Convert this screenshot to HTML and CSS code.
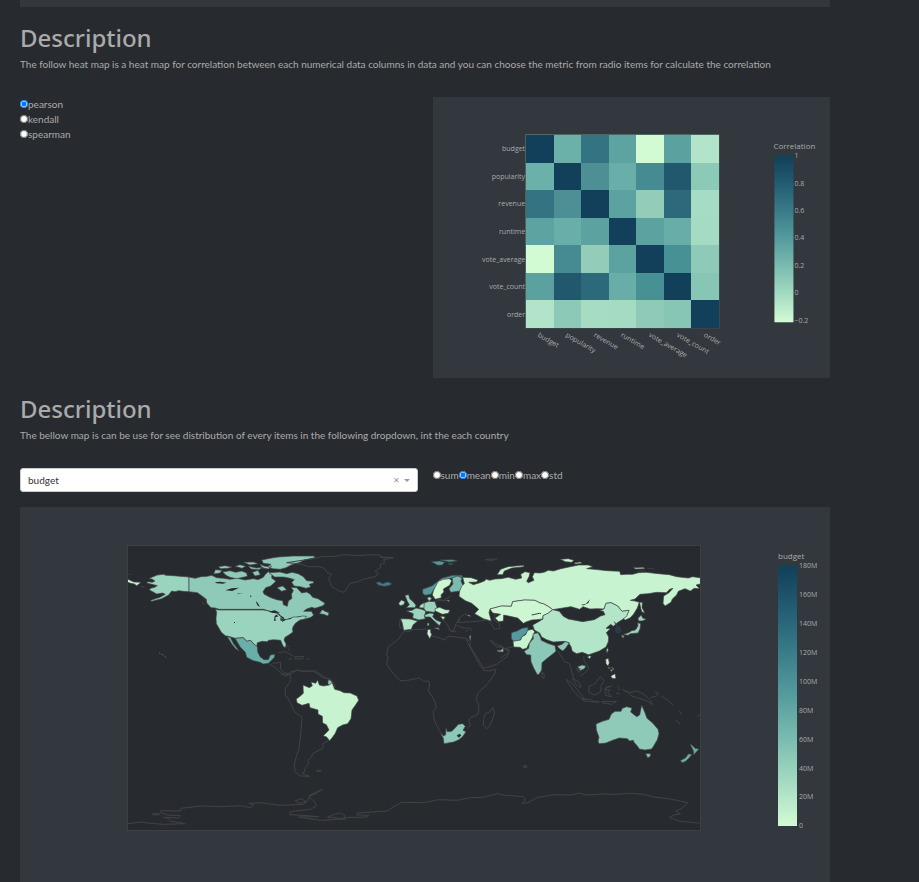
FILE: index.html
```html
<!DOCTYPE html>
<html lang="en">
<head>
<meta charset="utf-8">
<title>Movie data dashboard</title>
<link rel="stylesheet" href="styles.css">
</head>
<body>
<main class="page">
  <div class="panel-end"></div>

  <section class="block">
    <h1>Description</h1>
    <p>The follow heat map is a heat map for correlation between each numerical data columns in data and you can choose the metric from radio items for calculate the correlation</p>
    <div class="row">
      <div class="col radios-stacked">
        <label><input type="radio" name="metric" checked>pearson</label>
        <label><input type="radio" name="metric">kendall</label>
        <label><input type="radio" name="metric">spearman</label>
      </div>
      <div class="col panel">
        <svg class="chart" viewBox="0 0 397 281" role="img" aria-label="Correlation heat map">
          <defs>
            <linearGradient id="mint" x1="0" y1="1" x2="0" y2="0">
              <stop offset="0" stop-color="#d2fbd4"/><stop offset=".1667" stop-color="#a5dbc2"/><stop offset=".3333" stop-color="#7bbcb0"/><stop offset=".5" stop-color="#559c9e"/><stop offset=".6667" stop-color="#3a7c89"/><stop offset=".8333" stop-color="#235d72"/><stop offset="1" stop-color="#123f5a"/>
            </linearGradient>
          </defs>
          <rect class="frame" x="92" y="37" width="194" height="194"/>
          <g id="cells" transform="translate(93 38)"></g>
          <g class="tick end">
            <text x="92" y="54">budget</text><text x="92" y="82">popularity</text><text x="92" y="109">revenue</text><text x="92" y="137">runtime</text><text x="92" y="165">vote_average</text><text x="92" y="192">vote_count</text><text x="92" y="220">order</text>
          </g>
          <g class="tick">
            <text transform="translate(104 239) rotate(30)">budget</text><text transform="translate(132 239) rotate(30)">popularity</text><text transform="translate(160 239) rotate(30)">revenue</text><text transform="translate(187 239) rotate(30)">runtime</text><text transform="translate(215 239) rotate(30)">vote_average</text><text transform="translate(243 239) rotate(30)">vote_count</text><text transform="translate(270 239) rotate(30)">order</text>
          </g>
          <text class="legend" x="340" y="52">Correlation</text>
          <rect x="341" y="59" width="19" height="166" fill="url(#mint)"/>
          <g class="tick">
            <text x="361" y="61">1</text><text x="361" y="89">0.8</text><text x="361" y="116">0.6</text><text x="361" y="143">0.4</text><text x="361" y="171">0.2</text><text x="361" y="198">0</text><text x="361" y="226">−0.2</text>
          </g>
        </svg>
      </div>
    </div>
  </section>

  <section class="block">
    <h1>Description</h1>
    <p>The bellow map is can be use for see distribution of every items in the following dropdown, int the each country</p>
    <div class="row">
      <div class="col dropdown">
        <select aria-label="Column"><option>budget</option></select>
        <button class="clear" type="button" aria-label="Clear">×</button>
        <span class="arrow"></span>
      </div>
      <div class="col radios-inline">
        <label><input type="radio" name="agg">sum</label><label><input type="radio" name="agg" checked>mean</label><label><input type="radio" name="agg">min</label><label><input type="radio" name="agg">max</label><label><input type="radio" name="agg">std</label>
      </div>
    </div>
    <div class="panel map-panel">
      <svg class="chart" viewBox="0 0 810 375" role="img" aria-label="World map of budget">
        <svg x="107" y="38" width="574" height="286" viewBox="0 0 1722 858">
          <rect class="sea" width="1722" height="858"/>

          <!-- North America -->
          <g transform="translate(-21 -15)">
            <path class="land" fill="#9bd4be" d="M88 115L112 105 130 103 138 106 160 107 180 109 207 111V155L190 154 176 152 165 155 155 153 146 165 125 176 95 184 92 181 120 172 136 163 128 159 110 162 98 155 88 150 92 145 104 142 112 137 96 133 80 129 84 125 97 127 105 123 97 118Z"/>
            <path class="land" fill="#c8f3d0" d="M21 116L33 122 42 126 63 127 56 133 50 137 43 132 32 130 21 126ZM21 103h12"/>
            <path class="land" fill="#8fcab8" d="M207 111L225 115 243 110 262 109 275 106 290 113 310 115 330 118 352 115 375 120 400 116 414 119 430 112 436 103 445 95 456 103 455 114 468 124 452 138 437 143 429 155 432 162 450 172 470 179 488 182 490 194 502 199 505 183 516 175 514 163 520 152 513 142 530 143 545 159 560 156 570 162 578 172 594 176 615 190 609 197 585 205 575 202 560 207 551 214 574 214 581 225 573 232 553 238 540 229 520 235 497 240 483 235 478 222 450 214 430 208H297L286 204 273 203 260 189 259 178 245 167 232 158 207 155Z"/>
            <path class="land" fill="#8fcab8" d="M286 89L306 91 300 99 281 102ZM308 96L330 92 347 97 365 93 380 99 382 109 350 116 330 112 318 106ZM295 80L315 77 336 81 324 85 302 86ZM345 79L360 74 377 79 366 85ZM370 67L400 66 415 71 390 75ZM385 79L410 84 430 82 416 89 393 87ZM397 97L414 91 421 104 405 108ZM420 73L435 79 455 78 446 87 427 84ZM425 60L450 55 475 51 520 48 583 48 584 53 553 60 540 67 515 74 498 83 481 88 458 86 442 80 453 73 430 70ZM447 98L480 96 500 101 516 97 534 101 550 110 560 122 580 124 581 129 568 133 572 141 558 145 541 140 522 138 515 127 523 119 507 114 490 111 464 111ZM471 143L488 138 500 149 485 154ZM598 221L607 209 618 215 627 218 624 228 611 223Z"/>
            <path class="land" fill="#9bd4be" d="M295 210H430L450 214 470 220 483 230 482 241 504 238 520 231 535 231 548 228 560 229 554 237 540 240 526 250 520 259 517 267 519 276 505 286 495 292 492 300 498 312 497 322 491 321 486 311 482 301 461 299 446 301 441 305 427 304 412 308 410 320 400 311 392 301 380 304 370 293 345 295 330 290 316 287 304 277 297 265 289 251 288 235 290 216 286 208Z"/>
            <path class="land" fill="#69afa9" d="M345 295L370 293 380 304 392 301 400 311 412 320 413 335 420 350 432 359 445 359 451 345 465 343 463 352 456 359 445 370 430 372 420 367 400 362 380 352 376 337 360 320ZM322 291L331 292 340 310 351 324 357 333 347 326 335 312Z"/>
            <path class="lake" d="M284 127L300 125 320 128 309 131 290 130ZM316 151L335 145 357 143 337 153ZM351 161l19-1-17 3ZM390 166l5 3-4 3ZM407 183L413 188 420 201 412 196ZM445 215L464 211 480 218 460 219ZM464 228L469 224 476 229 466 232 467 243 462 242ZM479 224L492 233 494 239 485 233ZM483 242L501 237 488 245ZM502 236l16-3-8 5ZM342 246h3v3h-3Z"/>
            <path class="line" d="M148 164l6 7M245 184l7 10M251 174l8 10M62 139l12 3"/>
            <path class="islet" d="M117 338l4 3M124 343l6 2M133 348l6 5"/>
          </g>

          <!-- Greenland, Caribbean, Iceland -->
          <g transform="translate(399 -15)">
            <path class="line" d="M80 68L103 70 125 73 145 80 178 80 193 85 201 97 215 103 205 118 213 131 215 140 235 152 252 157 258 150 270 130 288 127 310 118 345 110 356 101 345 94 362 83 361 74 375 66 370 59 400 53 362 51 362 46 330 44 296 47 252 44 226 49 185 50 160 56 126 61Z"/>
            <path class="land" fill="#3d7f8c" d="M348 128L358 126 367 131 383 126 394 130 392 135 374 139 357 136Z"/>
            <path class="line" d="M38 370L62 367 61 386 71 398 91 402 112 390 130 394 167 392 190 410 213 420M25 370L43 381 62 398 76 409 91 402M55 338L76 335 100 348M105 350L132 349 126 357 105 356ZM138 357h10M85 357h11M81 318l8 2M87 325v7"/>
          </g>

          <!-- South America -->
          <g transform="translate(399 345)">
            <path class="line" d="M62 42L80 45 92 35 115 30 122 34 157 33 169 38 190 54 210 57 222 70 226 86M91 40L91 65 77 83 75 104 90 125 103 155 126 171 122 222 117 264 109 290 103 312 105 335 122 348 149 349 130 342 137 322 147 310 143 303 155 290 158 281 178 270 189 263 188 251 207 240M125 340l8-3M169 333l8-3 7 2-7 3Z"/>
            <path class="land" fill="#c8f3d0" d="M129 75L148 83 157 77 153 66 167 70 173 60 178 75 190 78 207 75 216 67 224 88 240 92 252 98 271 99 291 108 296 121 286 136 276 150 273 176 263 191 248 195 233 203 226 220 218 231 209 242 200 231 190 227 207 210 199 194 188 189 187 169 174 162 174 150 150 143 147 130 126 136 111 128 109 117 121 108 130 100Z"/>
            <path class="land" fill="#8bc8b7" d="M204 60l8 1 4 7-8 7-4-4Z"/>
          </g>

          <!-- Africa and the Middle East -->
          <g transform="translate(759 225)">
            <path class="line" d="M74 31L84 35 100 29 143 27M155 48L170 51 195 60 202 49 219 50 258 55 265 72 275 90 286 112 299 134 311 151 326 153 347 148 345 160 325 189 295 218 288 235 297 257 295 281 272 294 266 300 271 318 262 325M74 31L53 60 25 80 20 100 24 115 20 133 35 155 60 182 80 181 110 176 120 174 130 184 147 183 149 195 145 212 157 230 166 250 168 263 159 275 163 300 177 330 188 345M258 55L271 67 270 77 281 96 300 127 312 145 350 133 381 110 387 95 368 82 350 81 331 63 332 60 346 71 376 86 398 80M338 263L344 280 332 312 321 326 310 315 311 298 317 280 328 277Z"/>
            <path class="land" fill="#8bc8b7" d="M182 341L191 348 197 344 198 324 202 335 215 334 223 326 235 313 248 311 256 319 249 331 258 335 247 351 235 360 221 366 192 371 190 355ZM350 91L362 91 370 84 370 96 355 95Z"/>
            <path class="lake" d="M230 347l8-6 6 5-7 7Z"/>
            <path class="land" fill="#c8f3d0" d="M143 29L152 28 152 37 155 44 149 56 141 41Z"/>
            <path class="land" fill="#a5dbc2" d="M270 46l3 1-2 15-3-8Z"/>
            <path class="line" d="M430 440l4-4 6 2-2 6-6-1Z"/>
          </g>

          <!-- Europe -->
          <g transform="translate(759 -15)">
            <path class="line" d="M60 240L58 260 68 266M188 237L203 255 212 274 222 270 228 251M228 251L240 232 254 222 270 229M230 255L245 263 272 265 275 272M240 232L235 248 300 243 323 239M215 275h13M256 273l9-3M157 185L180 182 210 181M157 173L190 181 213 168M345 220L342 240 358 251 360 266 342 267 335 253 323 239M0 52L40 54"/>
            <path class="land" fill="#53999d" d="M128 148L157 137 185 115 218 106 246 106 248 111 225 111 206 117 187 125 170 137 160 151 153 163 135 166 128 160ZM154 65L178 63 194 67 186 75 174 76ZM180 60L218 59 232 63 208 66ZM204 71l16 0-10 3Z"/>
            <path class="land" fill="#cdf7d2" d="M160 153L166 140 175 124 190 118 208 116 215 122 209 136 190 147 192 156 183 164 184 173 166 178 157 165Z"/>
            <path class="land" fill="#7bbcb0" d="M216 114L232 108 246 113 243 124 249 136 240 153 212 157 207 146 219 132Z"/>
            <path class="land" fill="#9bd4be" d="M75 166L86 164 89 176 98 184 108 195 105 203 79 203 88 194 82 184ZM80 213L96 211 108 204 126 208 137 213 134 231 136 236 117 240 98 234 100 221ZM132 189L147 184 165 185 172 206 162 217 138 214 130 203ZM132 225L150 219 162 221 158 230 168 240 184 247 178 257 164 244 150 231 135 231ZM141 173l9-3 5 6-8 8ZM162 264l13-1 4 6Z"/>
            <path class="land" fill="#b3e5c9" d="M62 236L90 237 113 243 99 255 94 268 71 271 67 250ZM56 190L64 180 75 185 71 194 60 197ZM120 196L132 188 132 204 118 203ZM142 249h5v8h-5Z"/>
            <path class="land" fill="#c8f3d0" d="M165 206L179 202 196 209 210 210 205 220 187 223 177 218 166 213ZM200 181l9 0-3 4ZM181 228l15 3-7 8Z"/>
            <path class="line" d="M316 59L333 57 350 58 333 61Z"/>
          </g>

          <!-- Asia -->
          <g transform="translate(1119 -15)">
            <path class="land" fill="#c8f3d0" d="M-112 112L-87 113 -66 120 -70 126 -94 127 -80 134 -60 128 -45 122 -43 117 -31 121 -15 117 3 116 25 112 47 118 65 114 62 103 75 95 90 98 87 110 80 124 85 128 102 121 97 110 103 98 119 99 132 97 145 91 160 93 183 86 207 81 236 75 265 75 278 80 260 86 282 88 321 92 359 94 362 104 378 103 398 103 415 98 438 97 475 101 508 104 530 110 565 114 578 110 604 114V131L588 135 599 146 583 145 571 153 555 146 535 154 530 165 517 177 513 187 495 198 489 190 491 168 507 158 519 145 509 148 499 158 470 157 444 161 420 163 405 177 391 181 405 183 418 187 412 204 401 222 391 233 376 240 369 236 378 229 387 211 366 214 353 198 333 188 318 190 312 207 291 206 270 207 249 200 239 208 213 200 188 204 158 209 146 200 130 191 120 189 105 181 73 180 38 185 34 199 4 198 -30 207 -33 218 -26 243 -50 236 -76 221 -64 208 -85 190 -104 182 -123 169 -121 153 -115 138 -107 131ZM-9 104L2 88 24 80 70 76 72 80 36 84 13 93 8 104ZM181 58L205 56 222 61 215 67 196 65ZM223 68l18-2 5 4-20 2ZM400 83l30-1 5 4-28 1ZM441 85l22 1M415 93l18 1M-98 227l5-3 5 5ZM419 187L427 187 426 203 434 218 426 216 422 204Z"/>
            <path class="land" fill="#cdf7d2" d="M-30 207L4 198 34 199 38 185 73 180 105 181 120 189 130 191 146 200 158 209 144 220 129 227 128 237 109 239 95 240 80 245 70 250 53 234 30 229 11 225 10 243 -4 245 -15 234 2 223 -22 219Z"/>
            <path class="land" fill="#b3e5c9" d="M158 209L178 214 190 229 205 237 248 245 283 239 302 228 315 224 310 214 299 212 312 207 318 190 333 188 353 198 366 214 387 211 380 229 365 240 352 248 340 259 332 253 318 265 331 266 319 278 326 291 325 305 318 321 298 333 273 342 265 344 247 337 230 341 217 334 213 320 206 308 193 304 160 306 140 299 125 291 119 279 103 270 98 255 116 245 129 237 129 227 144 220ZM262 351l7-4 5 3-5 6ZM319 330l4-7 2 7-4 9Z"/>
            <path class="land" fill="#53999d" d="M34 278L51 273 66 265 84 262 83 274 75 284 66 290 62 300 41 304 34 296Z"/>
            <path class="land" fill="#c8f3d0" d="M39 304L62 300 66 290 77 284 83 271 97 268 104 275 97 293 88 309 80 325 68 328 60 322 41 321Z"/>
            <path class="land" fill="#8bc8b7" d="M99 282L114 278 121 291 124 301 143 310 165 317 168 334 157 343 139 357 126 368 125 390 117 403 112 404 101 384 93 365 92 345 80 344 72 334 86 325 88 310 100 296ZM171 318L186 313 195 305 208 308 199 322 189 333 180 328ZM233 380L247 375 258 378 253 386 240 392Z"/>
            <path class="land" fill="#9bd4be" d="M370 283L386 278 395 272 406 270 414 258 413 248 422 251 420 267 414 279 391 281 384 286ZM414 235L424 225 428 234 439 238 426 243 416 243ZM363 285L373 288 369 295Z"/>
            <path class="land" fill="#123f5a" d="M347 265L358 260 363 270 358 278 349 277Z"/>
            <path class="land" fill="#cdf7d2" d="M317 358L325 355 328 369 324 378 318 371ZM334 407L345 401 348 415 339 416 333 410ZM330 389l7 1-2 5ZM334 380l8 8-3 2ZM324 380l6 4-3 3Z"/>
            <path class="lake" d="M242 195L258 191 270 178 265 189 251 196Z"/>
            <path class="line" d="M95 225L118 220 123 221M126 395l8 11-3 9-5-3ZM174 333L181 345 193 365 208 370 213 385 217 405M252 348L251 360 263 376 266 388 250 401 241 408M343 245l8 15M0 315L14 326 28 329 23 340 0 355M240 384L237 397 228 384"/>
          </g>

          <!-- Oceania -->
          <g transform="translate(1119 285)">
            <path class="line" d="M198 118L215 128 248 170 255 180 239 172 219 151ZM217 100L222 118 237 126 243 142 229 135 217 115M246 177L270 178 280 184 298 186 270 185 250 182ZM265 140L284 132 300 110 313 121 303 137 303 155 285 165 268 158ZM315 145L335 138 318 142 318 150 331 150 322 157 334 170 316 166ZM303 185L350 184 335 193 305 188M353 138l4 4 0 9M348 160l12 1M368 148L385 158 395 168 417 175 435 180 459 194 447 177 432 163 410 153 390 158 373 152M452 173L470 168 475 160 464 154M483 168L503 180 520 196M538 212l7 12M528 240l13 12M591 230l12-8M69 380l5-4 7 2-4 5Z"/>
            <path class="land" fill="#8fcab8" d="M288 252L307 244 327 238 334 222 345 214 363 214 367 205 380 200 396 204 392 216 410 230 419 225 425 196 431 209 436 221 441 235 458 249 474 268 477 281 472 299 461 318 455 327 435 330 418 327 412 318 402 307 400 301 389 303 382 296 358 294 334 302 318 309 297 311 294 303 297 292 289 270ZM437 341L452 341 450 350 443 353Z"/>
            <path class="land" fill="#69afa9" d="M570 311L579 318 585 325 597 327 590 335 581 344 580 332ZM541 362L557 353 565 342 576 343 568 353 557 364 547 368Z"/>
          </g>

          <!-- Antarctica -->
          <path class="line" d="M0 836L45 831 60 834 110 838 175 836 130 828 125 820 110 817 155 819 160 812 120 810 102 803 102 797 160 798 162 790 220 783 285 785 340 782 370 788 380 780 365 775 400 773 460 781 530 778 537 770 515 775 505 767 525 761 538 772 550 750 587 733 557 750 545 755 562 770 568 782 550 793 490 800 488 809 540 812 575 815 515 816 580 826 655 822 602 816 620 808 640 804 654 811 650 818 720 816 725 811 690 810 690 804 780 798 800 785 825 772 890 773 935 764 990 766 1030 758 1070 757 1110 746 1135 751 1190 755 1195 765 1185 775 1202 773 1230 758 1280 749 1335 750 1355 744 1380 750 1430 747 1465 748 1510 745 1550 748 1580 756 1630 762 1682 773 1665 790 1645 798 1660 807 1640 810 1628 818 1660 829 1722 835M76 807l18-2 5 4-15 1Z"/>
          <rect class="border" width="1722" height="858"/>
        </svg>

        <text class="legend" x="758" y="52">budget</text>
        <rect x="758" y="59" width="19" height="260" fill="url(#mint)"/>
        <g class="tick">
          <text x="779" y="61">180M</text><text x="779" y="90">160M</text><text x="779" y="119">140M</text><text x="779" y="148">120M</text><text x="779" y="177">100M</text><text x="779" y="206">80M</text><text x="779" y="235">60M</text><text x="779" y="264">40M</text><text x="779" y="292">20M</text><text x="779" y="321">0</text>
        </g>
      </svg>
    </div>
  </section>
</main>
<script src="script.js"></script>
</body>
</html>
```
FILE: styles.css
```css
* { box-sizing: border-box; }
html { overflow: hidden; }
body {
  margin: 0;
  background: #272b30;
  color: #aaa;
  font: 10px/15px Lato, "Open Sans", sans-serif;
}
.page { padding: 0 89px 0 20px; }
.panel-end { height: 7px; background: #32383e; }
.block { padding-top: 16px; }
h1 {
  margin: 0 0 4px;
  font-family: "Noto Sans", "Open Sans", sans-serif;
  font-size: 24px;
  font-weight: 500;
  line-height: 30px;
}
p { margin: 0 0 25px; }
.row { display: flex; gap: 15px; }
.col { flex: 1 1 0; min-width: 0; }
.panel { background: #32383e; }
.chart { display: block; width: 100%; height: auto; }
.radios-stacked label { display: block; }
.radios-inline { display: flex; align-items: flex-start; }
input[type="radio"] {
  width: 8px;
  height: 8px;
  margin: 0;
}
.dropdown { position: relative; }
.dropdown select {
  display: block;
  width: 100%;
  height: 24px;
  padding: 0 7px;
  border: 1px solid #ccc;
  border-radius: 3px;
  background: #fff;
  color: #333;
  font: inherit;
  appearance: none;
}
.clear {
  position: absolute;
  top: 4px;
  right: 18px;
  padding: 0;
  border: 0;
  background: none;
  color: #999;
  font: 11px/15px "Noto Sans", sans-serif;
}
.arrow {
  position: absolute;
  top: 11px;
  right: 8px;
  border: 3px solid transparent;
  border-top-color: #999;
  border-bottom: 0;
}
.map-panel { margin-top: 15px; }
.tick, .legend { fill: #aaa; font-family: "Open Sans", sans-serif; }
.tick { font-size: 7px; }
.legend { font-size: 8px; }
.end { text-anchor: end; }
.frame { fill: #4d6b65; }
#cells { shape-rendering: crispEdges; }
.sea { fill: #272b30; }
.border { fill: none; stroke: #3e4042; stroke-width: 6; }
.land { stroke: #444; stroke-width: 2; stroke-linejoin: round; }
.line { fill: none; stroke: #424244; stroke-width: 3; stroke-linejoin: round; }
.islet { fill: none; stroke: #777; stroke-width: 2; }
.lake { fill: #272b30; }
```
FILE: script.js
```js
// Correlation matrix cells, one row per numeric column
const rows = [
  ["#123f5a", "#6bb0a9", "#337382", "#5da3a1", "#d2fbd4", "#5ba1a0", "#b1e4c8"],
  ["#6bb0a9", "#123f5a", "#4d8f94", "#69aea8", "#468b92", "#22586e", "#8cc9b7"],
  ["#337382", "#4d8f94", "#123f5a", "#5ca2a1", "#93cdb9", "#2c6a7b", "#a6dcc3"],
  ["#5da3a1", "#69aea8", "#5ca2a1", "#123f5a", "#5ca2a1", "#68ada8", "#a5dbc2"],
  ["#d2fbd4", "#468b92", "#93cdb9", "#5ca2a1", "#123f5a", "#479093", "#8ecab7"],
  ["#5ba1a0", "#22586e", "#2c6a7b", "#68ada8", "#479093", "#123f5a", "#87c5b5"],
  ["#b1e4c8", "#8cc9b7", "#a6dcc3", "#a5dbc2", "#8ecab7", "#87c5b5", "#123f5a"]
];
const cells = document.getElementById("cells");
const edge = i => Math.round(i * 193 / 7);
rows.forEach((row, r) => row.forEach((color, c) => {
  const rect = document.createElementNS("http://www.w3.org/2000/svg", "rect");
  rect.setAttribute("x", edge(c));
  rect.setAttribute("y", edge(r));
  rect.setAttribute("width", edge(c + 1) - edge(c));
  rect.setAttribute("height", edge(r + 1) - edge(r));
  rect.setAttribute("fill", color);
  cells.appendChild(rect);
}));
```
